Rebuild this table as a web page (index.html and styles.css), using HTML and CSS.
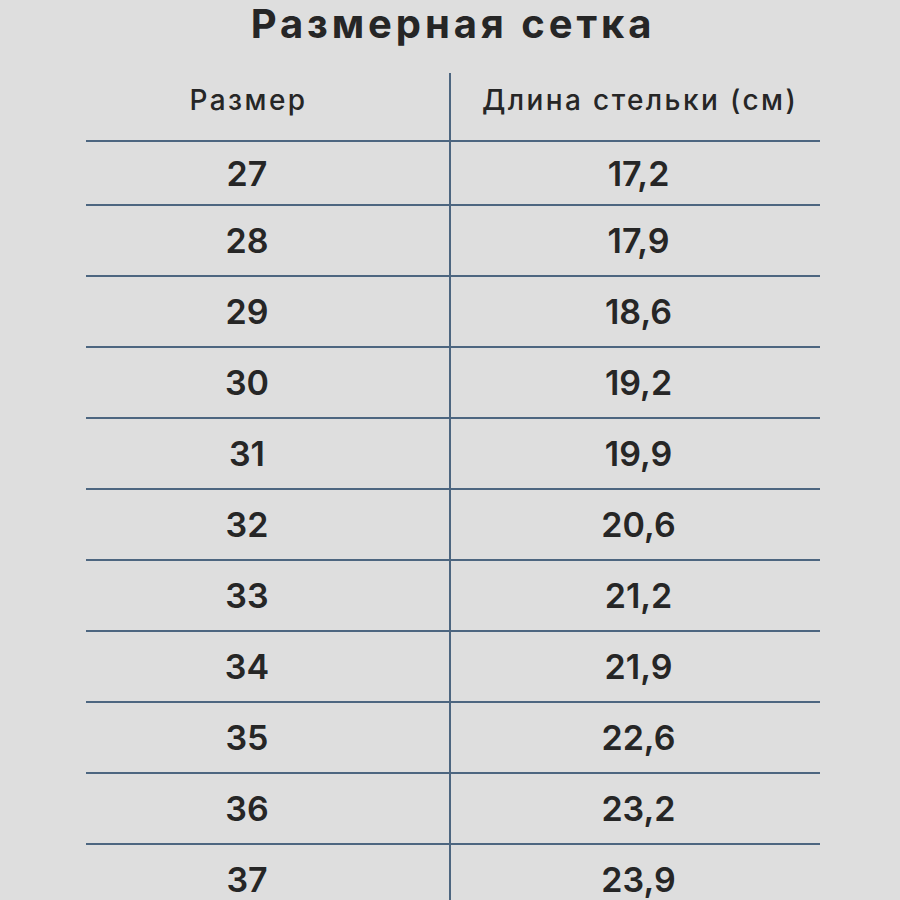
FILE: index.html
```html
<!DOCTYPE html>
<html lang="ru">
<head>
<meta charset="utf-8">
<title>Размерная сетка</title>
<link rel="stylesheet" href="styles.css">
</head>
<body>
<h1 class="title">Размерная сетка</h1>
<div class="table">
  <div class="row head">
    <div class="cell left">Размер</div>
    <div class="cell right">Длина стельки (см)</div>
  </div>
  <div class="row first">
    <div class="cell left">27</div>
    <div class="cell right">17,2</div>
  </div>
  <div class="row"><div class="cell left">28</div><div class="cell right">17,9</div></div>
  <div class="row"><div class="cell left">29</div><div class="cell right">18,6</div></div>
  <div class="row"><div class="cell left">30</div><div class="cell right">19,2</div></div>
  <div class="row"><div class="cell left">31</div><div class="cell right">19,9</div></div>
  <div class="row"><div class="cell left">32</div><div class="cell right">20,6</div></div>
  <div class="row"><div class="cell left">33</div><div class="cell right">21,2</div></div>
  <div class="row"><div class="cell left">34</div><div class="cell right">21,9</div></div>
  <div class="row"><div class="cell left">35</div><div class="cell right">22,6</div></div>
  <div class="row"><div class="cell left">36</div><div class="cell right">23,2</div></div>
  <div class="row"><div class="cell left">37</div><div class="cell right">23,9</div></div>
</div>
</body>
</html>
```

FILE: styles.css
```css
html, body {
  margin: 0;
  padding: 0;
  background: #dedede;
  color: #262626;
  font-family: Inter, "Open Sans", "Liberation Sans", sans-serif;
  overflow: hidden;
}
body {
  width: 900px;
  height: 900px;
}
.title {
  margin: 0;
  height: 73px;
  box-sizing: border-box;
  padding-top: 0;
  padding-left: 6px;
  font-size: 40px;
  line-height: 48px;
  font-weight: 700;
  text-align: center;
  letter-spacing: 3.9px;
}
.table {
  margin-left: 86px;
  width: 734px;
}
.row {
  display: grid;
  grid-template-columns: 363px 371px;
  height: 71px;
  box-sizing: border-box;
  border-top: 2px solid #4d6680;
}
.row.head {
  height: 67px;
  border-top: 0;
}
.row.first {
  height: 64px;
}
.cell {
  display: flex;
  align-items: center;
  justify-content: center;
  font-size: 34px;
  font-weight: 600;
}
.cell.left {
  padding-right: 41px;
}
.cell.right {
  border-left: 2px solid #4d6680;
  padding-left: 6px;
}
.head .cell {
  font-size: 28px;
  font-weight: 500;
  align-items: flex-start;
  padding-top: 10px;
  letter-spacing: 2.4px;
}
.head .cell.left {
  padding-right: 38px;
}
.head .cell.right {
  padding-left: 9px;
}
```
